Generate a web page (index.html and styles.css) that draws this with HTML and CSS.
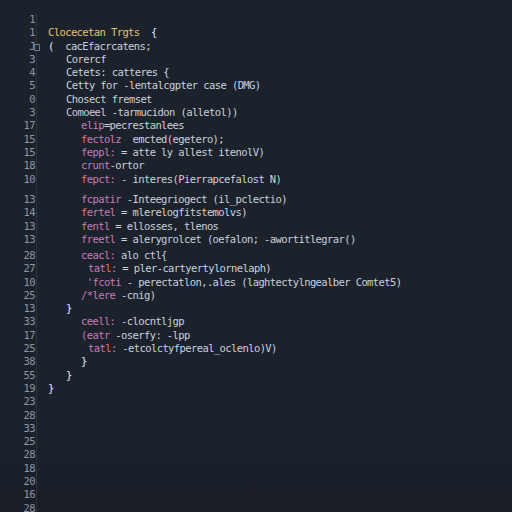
FILE: index.html
```html
<!DOCTYPE html>
<html>
<head>
<meta charset="utf-8">
<link rel="stylesheet" href="styles.css">
</head>
<body>
<div class="editor">
  <div class="gutter">
    <div class="ln">1</div>
    <div class="ln">1</div>
    <div class="ln">J<span class="fold"></span></div>
    <div class="ln">3</div>
    <div class="ln">4</div>
    <div class="ln">5</div>
    <div class="ln">0</div>
    <div class="ln">3</div>
    <div class="ln">17</div>
    <div class="ln">15</div>
    <div class="ln">15</div>
    <div class="ln">18</div>
    <div class="ln">10</div>
    <div class="ln gap-a">13</div>
    <div class="ln">14</div>
    <div class="ln">13</div>
    <div class="ln">13</div>
    <div class="ln gap-b">28</div>
    <div class="ln">27</div>
    <div class="ln">10</div>
    <div class="ln">25</div>
    <div class="ln">13</div>
    <div class="ln">33</div>
    <div class="ln">17</div>
    <div class="ln">25</div>
    <div class="ln">38</div>
    <div class="ln">55</div>
    <div class="ln">19</div>
    <div class="ln">23</div>
    <div class="ln">28</div>
    <div class="ln">33</div>
    <div class="ln">25</div>
    <div class="ln">28</div>
    <div class="ln">18</div>
    <div class="ln">20</div>
    <div class="ln">16</div>
    <div class="ln">28</div>
  </div>
  <div class="code">
    <div class="row"></div>
    <div class="row i0"><span class="y">Clocecetan Trgts</span>  <span class="w">{</span></div>
    <div class="row i0"><span class="w">(</span>  cacEfacrcatens;</div>
    <div class="row i1">Corercf</div>
    <div class="row i1">Cetets: catteres {</div>
    <div class="row i1">Cetty for -lentalcgpter case (DMG)</div>
    <div class="row i1">Chosect fremset</div>
    <div class="row i1"><span class="l">Comoeel</span> -tarmucidon (alletol))</div>
    <div class="row i2"><span class="p">elip</span>=pecrestanlees</div>
    <div class="row i2"><span class="p">fectolz</span>  emcted(egetero);</div>
    <div class="row i2"><span class="p">feppl:</span> = atte ly allest itenolV)</div>
    <div class="row i2"><span class="p">crunt</span>-ortor</div>
    <div class="row i2"><span class="p">fepct:</span> - interes(Pierrapcefalost N)</div>
    <div class="row i2 gap-a"><span class="p">fcpatir</span> -Inteegriogect (il_pclectio)</div>
    <div class="row i2"><span class="p">fertel</span> = mlerelogfitstemolvs)</div>
    <div class="row i2"><span class="p">fentl</span> = ellosses, tlenos</div>
    <div class="row i2"><span class="p">freetl</span> = alerygrolcet (oefalon; -awortitlegrar()</div>
    <div class="row i2 gap-b"><span class="p">ceacl:</span> alo ctl{</div>
    <div class="row i3"><span class="p">tatl:</span> = pler-cartyertylornelaph)</div>
    <div class="row i2"> <span class="p">'fcoti</span> - perectatlon,.ales (laghtectylngealber Comtet5)</div>
    <div class="row i2"><span class="p">/*lere</span> -cnig)</div>
    <div class="row i1 w">}</div>
    <div class="row i2"><span class="p">ceell:</span> -clocntljgp</div>
    <div class="row i2"><span class="p">(eatr</span> -oserfy: -lpp</div>
    <div class="row i3"><span class="p">tatl:</span> -etcolctyfpereal_oclenlo)V)</div>
    <div class="row i2 w">}</div>
    <div class="row i1 w">}</div>
    <div class="row i0 w">}</div>
  </div>
</div>
</body>
</html>
```
FILE: styles.css
```css
html, body {
  margin: 0;
  padding: 0;
  height: 100%;
  overflow: hidden;
}
body {
  background: linear-gradient(180deg, #1c222c 0%, #1c222c 85%, #181d26 100%);
  font-family: "DejaVu Sans Mono", "Liberation Mono", monospace;
  font-size: 10.5px;
  letter-spacing: -0.6px;
  color: #c9d1dc;
}
.editor {
  display: flex;
  padding-top: 13px;
  height: 100%;
  box-sizing: border-box;
}
.gutter {
  width: 36px;
  border-right: 1px solid #2a323e;
  flex: none;
  padding-bottom: 40px;
}
.ln {
  position: relative;
  height: 13.3px;
  line-height: 13.3px;
  text-align: right;
  padding-right: 1px;
  color: #8d97a6;
}
.fold {
  position: absolute;
  right: -4px;
  top: 4px;
  width: 4px;
  height: 5px;
  border: 1px solid #6f7987;
}
.code {
  flex: 1;
  padding-left: 11px;
}
.row {
  height: 13.3px;
  line-height: 13.3px;
  white-space: pre;
}
.gap-a { margin-top: 7.3px; }
.gap-b { margin-top: 2.6px; }
.i0 { padding-left: 0; }
.i1 { padding-left: 18px; }
.i2 { padding-left: 33px; }
.i3 { padding-left: 40px; }
.y { color: #e3c46e; }
.w { color: #e6eaf0; }
.p { color: #c57cb8; }
.l { color: #d2c4de; }
```
